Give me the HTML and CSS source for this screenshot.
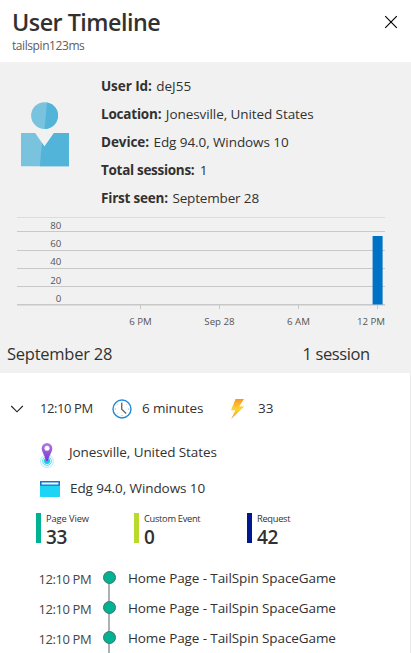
FILE: index.html
```html
<!DOCTYPE html>
<html lang="en">
<head>
<meta charset="utf-8">
<title>User Timeline</title>
<link rel="stylesheet" href="styles.css">
</head>
<body>
<div class="panel">
  <header class="header">
    <div>
      <h1 class="title">User Timeline</h1>
      <div class="subtitle">tailspin123ms</div>
    </div>
    <svg class="close" width="14" height="14" viewBox="0 0 14 14"><path d="M1.2 1.2 12.8 12.8M12.8 1.2 1.2 12.8" stroke="#000" stroke-width="1.15" fill="none"/></svg>
  </header>

  <section class="summary">
    <div class="profile">
      <svg class="avatar" width="48" height="65" viewBox="0 0 48 65">
        <circle cx="23.5" cy="13.6" r="13.4" fill="#7ac3de"/>
        <path d="M26 .4A13.4 13.4 0 0 1 23.5 27Z" fill="#52b4d9"/>
        <path d="M0 31H14.2L23.5 44.5 33 31H48V64.3H0Z" fill="#7ac3de"/>
        <path d="M21 41 23.5 44.5 33 31H48V64.3H18.8Z" fill="#52b4d9"/>
      </svg>
      <div class="facts">
        <div class="fact"><b class="t0">User Id:</b><span>deJ55</span></div>
        <div class="fact"><b class="t2">Location:</b><span class="t0">Jonesville, United States</span></div>
        <div class="fact"><b class="t0">Device:</b><span class="t0">Edg 94.0, Windows 10</span></div>
        <div class="fact"><b class="t3">Total sessions:</b><span class="one">1</span></div>
        <div class="fact"><b class="t2">First seen:</b><span class="t1">September 28</span></div>
      </div>
    </div>

    <svg class="chart" width="370" height="118" viewBox="0 0 370 118">
      <g class="grid">
        <rect class="faint" x="0" y="5" width="368" height="1"/>
        <rect x="0" y="19" width="368" height="1"/>
        <rect x="0" y="38" width="368" height="1"/>
        <rect x="0" y="56" width="368" height="1"/>
        <rect x="0" y="74" width="368" height="1"/>
        <rect x="0" y="92" width="368" height="1"/>
        <rect class="faint" x="0" y="93" width="368" height="1"/>
        <rect x="123" y="93" width="1" height="4"/>
        <rect x="202" y="93" width="1" height="4"/>
        <rect x="281" y="93" width="1" height="4"/>
        <rect x="360" y="93" width="1" height="4"/>
      </g>
      <rect x="355.6" y="24" width="10" height="68.5" fill="#0072c6"/>
      <g class="axis" text-anchor="end">
        <text x="44.3" y="17">80</text>
        <text x="44.3" y="35">60</text>
        <text x="44.3" y="53">40</text>
        <text x="44.3" y="72">20</text>
        <text x="44.3" y="90">0</text>
      </g>
      <g class="axis" text-anchor="middle">
        <text x="123.5" y="113">6 PM</text>
        <text x="202.5" y="113">Sep 28</text>
        <text x="281.5" y="113">6 AM</text>
        <text x="354" y="113">12 PM</text>
      </g>
    </svg>

    <div class="day">
      <span>September 28</span>
      <span class="count">1 session</span>
    </div>
  </section>

  <section class="session">
    <div class="session-head">
      <svg class="chevron" width="14" height="8" viewBox="0 0 14 8"><path d="M1.2 1 7 6.8 12.8 1" fill="none" stroke="#222" stroke-width="1.15"/></svg>
      <span class="start">12:10 PM</span>
      <svg class="clock" width="20" height="20" viewBox="0 0 20 20">
        <circle cx="10" cy="10" r="9" fill="#fff" stroke="#2489d8" stroke-width="1.4"/>
        <path d="M10 2.8v1M10 16.2v1M2.8 10h1M16.2 10h1M4.9 4.9l.5.5M15.1 4.9l-.5.5M4.9 15.1l.5-.5" stroke="#999" stroke-width="1"/>
        <path d="M9.7 4v6.2l4.4 4.3" fill="none" stroke="#6a6a6a" stroke-width="1.4"/>
      </svg>
      <span class="duration">6 minutes</span>
      <svg class="bolt" width="16" height="20" viewBox="0 0 16 20">
        <defs><linearGradient id="boltFill" x1="0" y1="0" x2="0" y2="1"><stop offset="0" stop-color="#f99526"/><stop offset=".5" stop-color="#ffd52e"/><stop offset="1" stop-color="#f8961f"/></linearGradient></defs>
        <path d="M5.5 0H14L9.2 7.5H14.2L1.2 20 5.4 11.2H1Z" fill="url(#boltFill)"/>
      </svg>
      <span>33</span>
    </div>

    <div class="meta place">
      <svg width="14" height="25" viewBox="0 0 14 25">
        <defs><linearGradient id="pinFill" x1="0" y1="0" x2="0" y2="1"><stop offset="0" stop-color="#b07be8"/><stop offset="1" stop-color="#7a35cf"/></linearGradient></defs>
        <circle cx="7" cy="18" r="6.5" fill="#eefbfe" stroke="#a4e9f5" stroke-width=".8"/>
        <circle cx="7" cy="18" r="4.4" fill="#d4f6fb" stroke="#5cd6ea" stroke-width=".9"/>
        <circle cx="7" cy="18" r="3" fill="#1bc5e0"/>
        <path d="M7 0A5.3 5.3 0 0 1 12.3 5.3C12.3 9.5 8.8 13 7.9 18H6.1C5.2 13 1.7 9.5 1.7 5.3A5.3 5.3 0 0 1 7 0Z" fill="url(#pinFill)"/>
        <circle cx="7" cy="5.3" r="2.5" fill="#fff"/>
      </svg>
      <span class="t0">Jonesville, United States</span>
    </div>
    <div class="meta device">
      <svg width="20" height="16" viewBox="0 0 20 16">
        <rect width="20" height="16" rx=".8" fill="#1cd4f4"/>
        <rect width="20" height="4.8" fill="#0d78d4"/>
        <rect x="1.6" y="1.5" width="16.8" height="2" fill="#f2f8fd"/>
      </svg>
      <span class="t0">Edg 94.0, Windows 10</span>
    </div>

    <div class="stats">
      <div class="stat page-view"><div class="label">Page View</div><div class="value">33</div></div>
      <div class="stat custom"><div class="label t3">Custom Event</div><div class="value">0</div></div>
      <div class="stat request"><div class="label t3">Request</div><div class="value">42</div></div>
    </div>

    <div class="events">
      <div class="event"><span class="time">12:10 PM</span><i class="dot"></i><span class="name">Home Page - TailSpin SpaceGame</span></div>
      <div class="event"><span class="time">12:10 PM</span><i class="dot"></i><span class="name">Home Page - TailSpin SpaceGame</span></div>
      <div class="event"><span class="time">12:10 PM</span><i class="dot"></i><span class="name">Home Page - TailSpin SpaceGame</span></div>
    </div>
  </section>
</div>
</body>
</html>
```
FILE: styles.css
```css
* { box-sizing: border-box; }
body {
  margin: 0;
  background: #fff;
  color: #323130;
  font: 13.5px/20px "Open Sans", "Noto Sans", sans-serif;
}
svg { display: block; flex: none; }
span, b { white-space: nowrap; }
.panel { width: 411px; height: 653px; overflow: hidden; }

.t0 { letter-spacing: -0.08px; }
.t1 { letter-spacing: -0.16px; }
.t2 { letter-spacing: -0.2px; }
.t3 { letter-spacing: -0.3px; }

.header {
  display: flex;
  justify-content: space-between;
  height: 62px;
  padding: 6px 13px 0 11px;
}
.title {
  margin: 0;
  padding-left: 1px;
  font-size: 23.3px;
  line-height: 32px;
  font-weight: 600;
  letter-spacing: -0.5px;
}
.subtitle {
  padding-left: 1px;
  font-size: 12px;
  line-height: 16px;
  letter-spacing: -0.42px;
  color: #605e5c;
}
.close { margin-top: 9px; }

.summary {
  height: 311px;
  padding-top: 10px;
  background: #f1f1f1;
}
.profile { display: flex; height: 140px; padding-left: 21px; }
.avatar { margin: 30px 32px 0 0; }
.fact { display: flex; gap: 4.5px; line-height: 28px; }
.one { padding-left: 1px; }

.chart { margin-left: 17px; }
.grid { fill: #c8c8c8; }
.grid .faint { fill: #dcdcdc; }
.axis { font-size: 9.7px; fill: #555; }

.day {
  display: flex;
  padding-left: 7px;
  font-size: 16.5px;
  line-height: 48px;
  letter-spacing: -0.25px;
}
.day span:first-child { width: 295.5px; }
.count { letter-spacing: -0.4px; }

.session {
  height: 280px;
  border-right: 1px solid #ebebeb;
  padding-top: 25px;
}
.session-head { display: flex; align-items: center; height: 21px; padding-left: 10px; }
.session-head span { margin-top: -1px; }
.chevron { margin-right: 16px; }
.start { width: 72px; font-size: 13px; letter-spacing: -0.4px; }
.clock { margin-right: 10px; }
.duration { width: 88px; letter-spacing: -0.15px; }
.bolt { margin-right: 12px; }

.meta { display: flex; align-items: center; height: 36px; padding-left: 40px; }
.place { margin-top: 15px; gap: 15px; }
.place svg { margin-top: 6px; }
.device { gap: 10px; }
.device svg { margin-top: 2px; }

.stats { display: flex; height: 30px; margin-top: 7px; padding-left: 36px; }
.stat { padding-left: 5px; border-left: 5px solid; height: 30px; }
.page-view { width: 98px; border-color: #00b294; }
.custom { width: 113px; border-color: #bad92d; }
.request { border-color: #00188f; }
.label { font-size: 9.3px; line-height: 12px; letter-spacing: -0.1px; color: #323130; }
.label.t3 { letter-spacing: -0.3px; }
.value { font-size: 19px; line-height: 24px; font-weight: 600; letter-spacing: -0.4px; color: #323130; }
.label, .value { white-space: nowrap; }

.events { margin-top: 20px; }
.event {
  display: flex;
  align-items: center;
  height: 30px;
  padding-left: 38.5px;
  background: linear-gradient(#adb0b5, #adb0b5) 108px 0 / 2px 100% no-repeat;
}
.event:first-child { background-position: 108px 15px; }
.time { width: 64px; padding-top: 2px; font-size: 13px; letter-spacing: -0.4px; color: #484644; }
.dot {
  width: 13px;
  height: 13px;
  margin-top: -1px;
  border: 1px solid #37796b;
  border-radius: 50%;
  background: #00b294;
}
.name { margin-left: 12.5px; letter-spacing: -0.1px; }
```
